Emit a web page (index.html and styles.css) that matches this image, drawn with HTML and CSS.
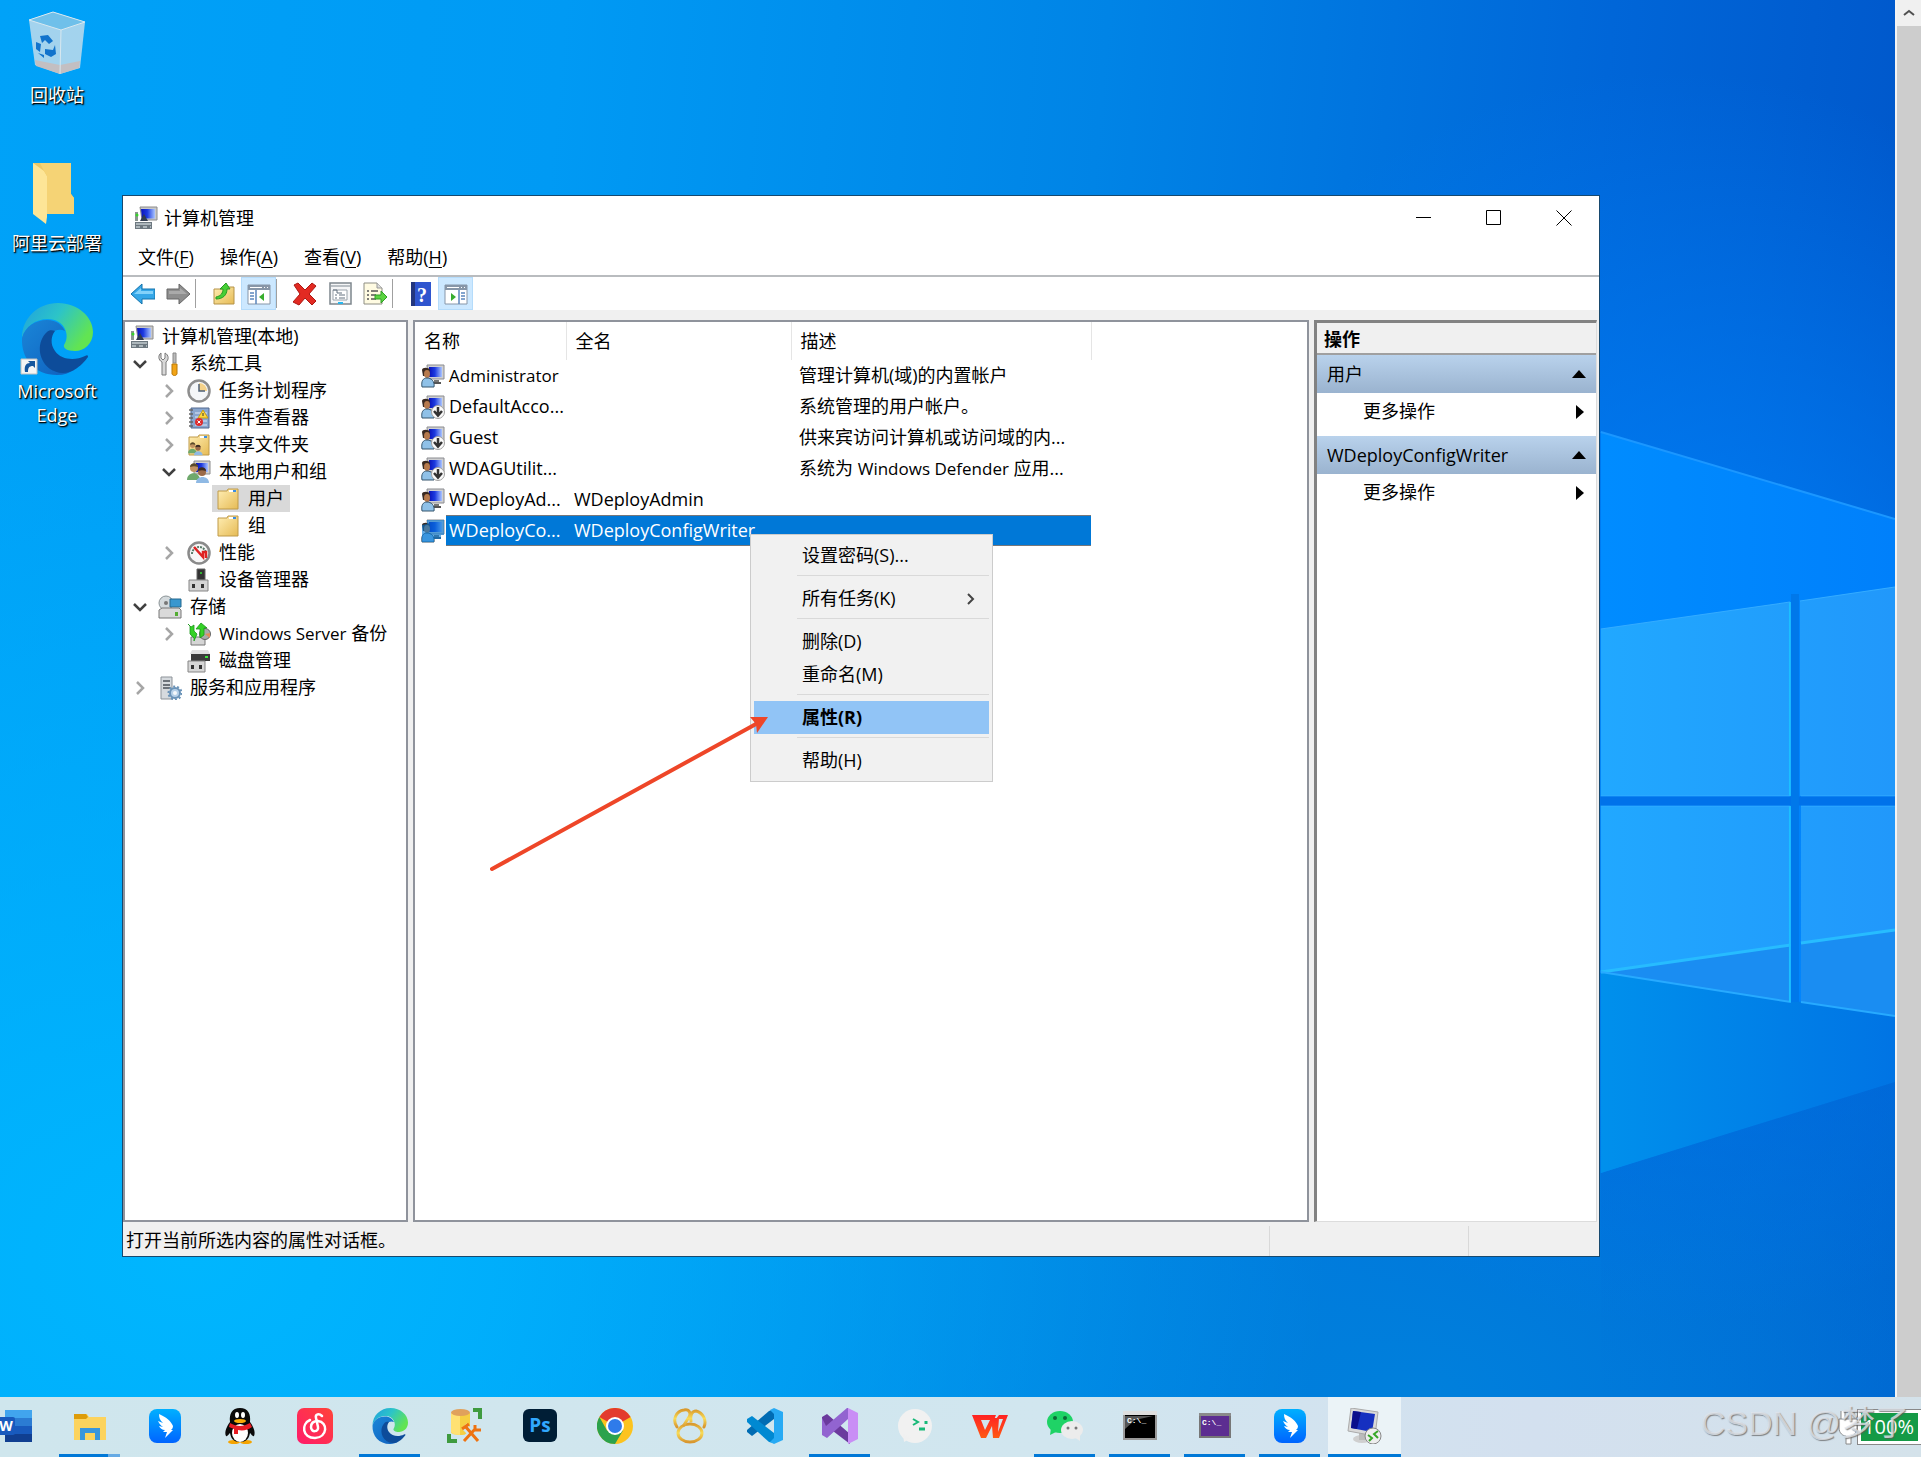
FILE: index.html
```html
<!DOCTYPE html>
<html lang="zh-CN">
<head>
<meta charset="utf-8">
<title>计算机管理</title>
<link rel="stylesheet" href="styles.css">
</head>
<body>
<svg class="defs" aria-hidden="true">
  <defs>
    <linearGradient id="screen" x1="0" y1="0" x2="1" y2="0"><stop offset="0" stop-color="#0a12b8"/><stop offset=".45" stop-color="#1c3ae0"/><stop offset="1" stop-color="#a9c4ff"/></linearGradient>
    <linearGradient id="folderFill" x1="0" y1="0" x2="1" y2="1"><stop offset="0" stop-color="#ffeeb4"/><stop offset="1" stop-color="#e6bb55"/></linearGradient>
    <linearGradient id="edgeTop" x1="0" y1="0" x2="1" y2=".5"><stop offset="0" stop-color="#1f9fe0"/><stop offset=".5" stop-color="#2cc4c8"/><stop offset="1" stop-color="#62e452"/></linearGradient>
    <linearGradient id="edgeBody" x1="0" y1="0" x2="1" y2="1"><stop offset="0" stop-color="#1a86d8"/><stop offset="1" stop-color="#0f5fbd"/></linearGradient>
    <linearGradient id="dingFill" x1="0" y1="0" x2="0" y2="1"><stop offset="0" stop-color="#00b0ff"/><stop offset="1" stop-color="#0064ff"/></linearGradient>
    <linearGradient id="neteaseFill" x1="0" y1="1" x2="1" y2="0"><stop offset="0" stop-color="#ff1b6b"/><stop offset="1" stop-color="#ff4438"/></linearGradient>
    <linearGradient id="goldFill" x1="0" y1="0" x2="0" y2="1"><stop offset="0" stop-color="#d99a2e"/><stop offset=".5" stop-color="#f8dc58"/><stop offset="1" stop-color="#d8962f"/></linearGradient>
    <linearGradient id="wpsFill" x1="0" y1="0" x2="0" y2="1"><stop offset="0" stop-color="#ff2222"/><stop offset="1" stop-color="#ff5a14"/></linearGradient>
    <linearGradient id="glass" x1="0" y1="0" x2="1" y2="0"><stop offset="0" stop-color="#21a8ff"/><stop offset="1" stop-color="#2198fb"/></linearGradient>
    <linearGradient id="beam" x1="0" y1="0" x2="1" y2="0"><stop offset="0" stop-color="#008cff"/><stop offset="1" stop-color="#0080fb"/></linearGradient>
    <linearGradient id="floor" x1="0" y1="0" x2="1" y2="0"><stop offset="0" stop-color="#0090ec"/><stop offset="1" stop-color="#0074e4"/></linearGradient>
    <linearGradient id="shade" x1="0" y1="0" x2="0" y2="1"><stop offset="0" stop-color="#006ad8" stop-opacity=".4"/><stop offset="1" stop-color="#0070d8" stop-opacity="0"/></linearGradient>

    <symbol id="i-computer" viewBox="0 0 24 24">
      <path d="M6 1h17v13H8z" fill="#c9c9c9" stroke="#8c8c8c"/><path d="M7 3h14v9.500H8z" fill="url(#screen)"/>
      <path d="M1 6h3v9H1z" fill="#8a9690"/><circle cx="3" cy="9" r="1.500" fill="#35d52a"/>
      <path d="M10 8l4 7H6z" fill="#303c50"/><path d="M1 16h17v7H1z" fill="#6d7880"/><path d="M2 18h15M2 21h4m3 0h4m3 0h1" stroke="#c2cbd0" stroke-width="1.500"/>
    </symbol>
    <symbol id="i-user" viewBox="0 0 24 24">
      <path d="M6 1h17v14H7z" fill="#cfd0d2" stroke="#8b8c90"/><path d="M8 3h13v10H8z" fill="url(#screen)"/><path d="M13 16h5v3h-5z" fill="#777"/><path d="M12 19h8" stroke="#555" stroke-width="2"/>
      <path d="M1 6c0-3 7-3 8 0l-1 6H2z" fill="#3a2a22"/><ellipse cx="6" cy="10" rx="3" ry="4" fill="#b77a4d"/><path d="M1 23c-1-6 1-9 5-9s8 3 7 9z" fill="#8fc1e8" stroke="#36566e"/>
    </symbol>
    <symbol id="i-user-off" viewBox="0 0 24 24"><use href="#i-user"/><circle cx="17" cy="17" r="6.500" fill="#fafafa" stroke="#a0a0a0"/><path d="M17 12v8m-4-4l4 4.500 4-4.500" fill="none" stroke="#333" stroke-width="2.500"/></symbol>
    <symbol id="i-user-sel" viewBox="0 0 24 24"><use href="#i-user"/><path d="M6 1h17v15h-3v4h-7v3H1V6l5-1z" fill="#0078d7" opacity=".6"/></symbol>
    <symbol id="i-tools" viewBox="0 0 24 24">
      <path d="M3 1v5l2 2 2-2V1c4 2 4 7 1 9v13H4V10C0 8 0 3 3 1z" fill="#d8d8d8" stroke="#7a7a7a"/><path d="M15 1h3v10h-3z" fill="#bbb" stroke="#888"/><path d="M14 12h5v10c-1 2-4 2-5 0z" fill="#f2a416" stroke="#b87808"/>
    </symbol>
    <symbol id="i-clock" viewBox="0 0 24 24"><circle cx="12" cy="12" r="10.500" fill="#f4f6f8" stroke="#8e8e8e" stroke-width="2.500"/><path d="M12 12V4a8 8 0 0 1 8 8z" fill="#f5d28a"/><path d="M12 5v7h6" fill="none" stroke="#4d6076" stroke-width="1.500"/></symbol>
    <symbol id="i-event" viewBox="0 0 24 24"><path d="M4 2h18v20H4z" fill="#89a6cf" stroke="#52688e"/><path d="M2 4h4M2 8h4M2 12h4M2 16h4M2 20h4" stroke="#666" stroke-width="1.500"/><path d="M8 7h12M8 11h12M8 15h12M8 19h12" stroke="#dfe8f6"/><path d="M16 4l5 8H11z" fill="#ffd83c" stroke="#c79c14"/><path d="M16 7v3" stroke="#333"/><circle cx="12" cy="16" r="4" fill="#de2d2d"/><path d="M10.500 14.500l3 3m0-3l-3 3" stroke="#fff"/></symbol>
    <symbol id="i-folder" viewBox="0 0 24 24"><path d="M2 4h9l1-2h10v20H2z" fill="url(#folderFill)" stroke="#bf9a49"/><path d="M13 4h7" stroke="#fff" stroke-width="2"/><path d="M17 4h3" stroke="#3a8de0" stroke-width="2"/></symbol>
    <symbol id="i-people" viewBox="0 0 24 24"><circle cx="7" cy="8" r="4" fill="#c29362"/><path d="M3 7c0-5 8-5 8 0-3-1-5-1-8 0z" fill="#5a4a2a"/><path d="M0 20c0-9 13-9 13 0z" fill="#6fa96c"/><circle cx="15" cy="12" r="4" fill="#9b6a48"/><path d="M11 11c0-5 8-5 8 0-3-1-5-1-8 0z" fill="#3a2a22"/><path d="M9 23c0-8 13-8 13 0z" fill="#8fb9e4"/></symbol>
    <symbol id="i-share" viewBox="0 0 24 24"><use href="#i-folder"/><svg x="1" y="7" width="16" height="16"><use href="#i-people"/></svg></symbol>
    <symbol id="i-group" viewBox="0 0 24 24"><path d="M7 1h16v13H7z" fill="#cfcfcf" stroke="#8c8c8c"/><path d="M9 3h12v9H9z" fill="url(#screen)"/><use href="#i-people"/></symbol>
    <symbol id="i-perf" viewBox="0 0 24 24"><circle cx="12" cy="12" r="10.500" fill="#f6f6f6" stroke="#8a8a8a" stroke-width="2.500"/><path d="M5 13a7 7 0 0 1 14 0" fill="none" stroke="#587a68" stroke-width="2" stroke-dasharray="2 1"/><path d="M7 6l9 10v-5h3v6" fill="none" stroke="#df2222" stroke-width="2.500"/></symbol>
    <symbol id="i-device" viewBox="0 0 24 24"><path d="M10 1h8v11h-8z" fill="#333" stroke="#666"/><circle cx="14" cy="5" r="1" fill="#33df33"/><path d="M2 12h19v11H2z" fill="#d5d5d5" stroke="#858585"/><path d="M5 16h3v4H5zm9 0h3v4h-3z" fill="#333"/></symbol>
    <symbol id="i-storage" viewBox="0 0 24 24"><circle cx="8" cy="8" r="7" fill="#d4dadd" stroke="#8b9396"/><circle cx="8" cy="8" r="2" fill="#777"/><path d="M12 4h11v8H12z" fill="#3997cf" stroke="#24688e"/><path d="M1 15l3-2h17l2 2v8H1z" fill="#dadada" stroke="#777"/><path d="M17 17h3v4h-3z" fill="#54ad33"/></symbol>
    <symbol id="i-backup" viewBox="0 0 24 24"><path d="M4 15h14v8H4z" fill="#d5d5d5" stroke="#777"/><circle cx="18" cy="12" r="5.500" fill="#aaa" stroke="#666"/><path d="M18 12l5-1v5z" fill="#e28b5c"/><path d="M1 2l2 2v8l4 4v3l3-7-3-3V3L4 5zm13-1l6 5h-3v7l-4 3V7H9z" fill="#35d226" stroke="#1a981a" stroke-width=".8"/></symbol>
    <symbol id="i-disk" viewBox="0 0 24 24"><path d="M5 1h16l2 4H3z" fill="#e0e0e0"/><path d="M4 5h19v7H4z" fill="#3a3a3a"/><path d="M18 8h3" stroke="#3ce33c" stroke-width="2"/><path d="M1 12h17v11H1z" fill="#d7d7d7" stroke="#858585"/><path d="M4 16h3v4H4zm8 0h3v4h-3z" fill="#333"/></symbol>
    <symbol id="i-service" viewBox="0 0 24 24"><path d="M3 1h11v22H3z" fill="#d6dade" stroke="#8d9399"/><path d="M5 5h7M5 9h7M5 12h7" stroke="#4a5058" stroke-width="1.500"/><circle cx="17" cy="17" r="5" fill="#b6d0e8" stroke="#6a93b8" stroke-width="2"/><circle cx="17" cy="17" r="6.500" fill="none" stroke="#6a93b8" stroke-width="2" stroke-dasharray="2 2"/><circle cx="17" cy="17" r="2" fill="#f4f8fb"/></symbol>
    <symbol id="i-open" viewBox="0 0 20 20"><path d="M4 7l6 6 6-6" fill="none" stroke="#404040" stroke-width="2.500"/></symbol>
    <symbol id="i-closed" viewBox="0 0 20 20"><path d="M7 4l6 6-6 6" fill="none" stroke="#a6a6a6" stroke-width="2.500"/></symbol>

    <symbol id="i-edge" viewBox="0 0 72 72">
      <path d="M1 35C1 15 17 0 37 0c20 0 35 14 35 29 0 12-9 19-18 19-8 0-12-3-11-6 7-10 0-26-16-26C14 16 4 24 1 35z" fill="url(#edgeTop)"/>
      <path d="M1 35c3-12 14-18 25-18 10 0 15 5 18 11-8-4-18 2-18 14 0 14 12 26 27 25-5 3-10 5-17 5C14 72 0 56 1 35z" fill="url(#edgeBody)"/>
      <path d="M26 29c-10 9-10 27 3 37 6 4 15 6 24 1 7-4 11-9 14-13 0-2-1-2-3-1-10 5-24 4-30-5-5-7-4-15 0-20-3-1-6-1-8 1z" fill="#0d4c9a"/>
    </symbol>
    <symbol id="i-ding" viewBox="0 0 36 36"><rect x="2" y="1" width="32" height="34" rx="8" fill="url(#dingFill)"/><path d="M12 6c7 3 12 7 14 12 0 2-1 3-2 4h2l-8 8 2-6h-4l2-2c-3 0-5-2-6-4l4 1c-3-2-4-4-5-6l5 2c-3-3-4-5-4-9z" fill="#fff"/></symbol>
  </defs>
</svg>

<main class="desktop">
  <svg class="wallpaper" viewBox="0 0 1894 1397" preserveAspectRatio="none" aria-hidden="true">
    <path d="M1600 432l294 87v560l-294 94z" fill="url(#beam)"/>
    <path d="M1600 432l294 87" stroke="#1b97ff" stroke-width="2"/>
    <path d="M1600 972l294 44v66l-294 91z" fill="url(#floor)"/>
    <path d="M1600 1173l294-91v315h-294z" fill="url(#shade)"/>
    <path d="M1600 629l189-27v194h-189zM1799 601l95-14v209h-95z" fill="url(#glass)"/>
    <path d="M1600 806h190v196l-190-30zM1800 806h94v210l-94-14z" fill="url(#glass)"/>
    <path d="M1600 972l190-27v57zM1800 943l94-13v86l-94-14z" fill="#1a8df2"/>
    <path d="M1600 972l190-27m10-2l94-13" stroke="#27bcff" stroke-width="3"/>
    <path d="M1600 972l190 30m10 0l94 14" stroke="#27aaff" stroke-width="2"/>
    <path d="M1789 602v194m0 10v196" stroke="#1cc0ff" stroke-width="2"/>
    <path d="M1600 629l189-27m10-1l95-14M1600 796h189m11 0h94M1600 806h189m11 0h94" stroke="#35acff" stroke-width="1"/>
    <path d="M1590 801h304" stroke="#0072ea" stroke-width="9"/>
    <path d="M1794 594v408" stroke="#0078ea" stroke-width="8"/>
  </svg>

  <div class="shortcuts">
    <button class="shortcut">
      <svg viewBox="0 0 114 83"><path d="M29 20l24-8 32 10-5 46-20 6-25-9z" fill="#b9d9ec" opacity=".88"/><path d="M29 20l24-8 32 10-24 8z" fill="#6fc0ea" stroke="#d8e8f0"/><path d="M35 60l25 5 20-4-1 7-19 6-24-8z" fill="#c3bfc2"/><path d="M61 30l-1 44" stroke="#d8e8f0"/><path d="M40 36l8-1 5 6-4 3-4-4-3 3zM36 42l5 2-1 8-4-3zM45 49l8 1 2-5 1 9-5 3-6-3zM38 53l6 2v3z" fill="#1173cc"/></svg>
      <span>回收站</span>
    </button>
    <button class="shortcut">
      <svg viewBox="0 0 114 83"><path d="M33 15h38v31l3 4v16H46l-11-3z" fill="#ecc766"/><path d="M33 15l11 8 3 5v41l-1 7-13-10z" fill="#fde597"/><path d="M40 15h31v31l3 4v16H47V28l-3-5z" fill="#f5d375"/></svg>
      <span>阿里云部署</span>
    </button>
    <button class="shortcut">
      <svg viewBox="0 0 114 83"><svg x="21" y="7" width="72" height="72"><use href="#i-edge"/></svg><path d="M21 63h16v15H21z" fill="#f4f4f4" stroke="#c0c0c0"/><path d="M25 76c-1-6 1-9 5-9l-2-2h7v7l-2-2c-4 0-5 2-5 6z" fill="#15559d"/></svg>
      <span>Microsoft Edge</span>
    </button>
  </div>

  <section class="window">
    <header class="titlebar">
      <svg class="icon"><use href="#i-computer"/></svg>
      <h1>计算机管理</h1>
      <div class="caption">
        <button aria-label="最小化"><svg viewBox="0 0 16 16"><path d="M0 7.500h15"/></svg></button>
        <button aria-label="最大化"><svg viewBox="0 0 16 16"><path d="M.5.5h14v14H.5z"/></svg></button>
        <button aria-label="关闭"><svg viewBox="0 0 16 16"><path d="M.5.5l15 15m0-15l-15 15"/></svg></button>
      </div>
    </header>
    <nav class="menubar">
      <button>文件(<u>F</u>)</button><button>操作(<u>A</u>)</button><button>查看(<u>V</u>)</button><button>帮助(<u>H</u>)</button>
    </nav>
    <div class="toolbar">
      <button aria-label="后退"><svg class="icon" viewBox="0 0 24 24"><path d="M0 12L11 2v5h13v10H11v5z" fill="#35a7e8" stroke="#1272ab"/><path d="M3 12l7-6v3h12v3z" fill="#83d2fa"/></svg></button>
      <button aria-label="前进"><svg class="icon" viewBox="0 0 24 24"><path d="M24 12L13 2v5H1v10h12v5z" fill="#8e8e8e" stroke="#666"/><path d="M21 12l-7-6v3H3v3z" fill="#aaa"/></svg></button>
      <i></i>
      <button aria-label="上一级"><svg class="icon" viewBox="0 0 24 24"><path d="M2 7h8l2-2h10v17H2z" fill="url(#folderFill)" stroke="#b59348"/><path d="M4 15c5-1 7-4 7-8H8l6-6 4 6h-3c0 6-4 10-11 10z" fill="#46cf35" stroke="#269a22"/></svg></button>
      <button class="on" aria-label="显示控制台树"><svg class="icon" viewBox="0 0 24 24"><path d="M1 3h22v19H1z" fill="#fff" stroke="#8796a8"/><path d="M1 3h22v5H1z" fill="#8796a8"/><path d="M3 5.500h12m2 0h1m2 0h1" stroke="#fff"/><path d="M9 8v14M3 11h4M3 14h4M3 17h4" stroke="#5b87bd" stroke-width="1.500"/><path d="M17 11v8l-5-4z" fill="#38ad2d"/></svg></button>
      <i></i>
      <button aria-label="删除"><svg class="icon" viewBox="0 0 24 24"><path d="M1 3l4-2 7 7 7-7 4 3-7 8 7 7-4 4-7-7-6 7-6-3 7-8z" fill="#e22a22" stroke="#ad1712"/></svg></button>
      <button aria-label="属性"><svg class="icon" viewBox="0 0 24 24"><path d="M2 1h21v21H2z" fill="#f5f6f7" stroke="#7e868d" stroke-width="1.500"/><path d="M3 4h19" stroke="#b9bfc4" stroke-width="2"/><path d="M5 8h14v10H5z" fill="#fff" stroke="#9aa3ab"/><path d="M5 8h4v3h5M7 13h2m2 0h6M7 16h2m2 0h6" fill="none" stroke="#63717e"/><path d="M10 21h5" stroke="#28b6ee" stroke-width="2"/></svg></button>
      <button aria-label="导出列表"><svg class="icon" viewBox="0 0 24 24"><path d="M1 1h13l5 5v16H1z" fill="#fffbe2" stroke="#8e8e84"/><path d="M14 1v5h5" fill="#ddd" stroke="#999"/><path d="M4 9h2m2 0h7M4 13h2m2 0h5M4 17h2m2 0h5" stroke="#555" stroke-width="1.500"/><path d="M12 13h6V9l6 6-6 6v-4h-6z" fill="#5bd341" stroke="#2f9e26"/></svg></button>
      <i></i>
      <button aria-label="帮助"><svg class="icon" viewBox="0 0 24 24"><path d="M2 0h20v24H2z" fill="#2f55cf"/><path d="M2 0h4v24H2z" fill="#23367e"/><text x="13" y="20" text-anchor="middle" class="qmark">?</text></svg></button>
      <button class="on" aria-label="显示操作窗格"><svg class="icon" viewBox="0 0 24 24"><path d="M1 3h22v19H1z" fill="#fff" stroke="#8796a8"/><path d="M1 3h22v5H1z" fill="#8796a8"/><path d="M3 5.500h12m2 0h1m2 0h1" stroke="#fff"/><path d="M15 8v14M17 11h4M17 14h4M17 17h4" stroke="#5b87bd" stroke-width="1.500"/><path d="M7 11v8l5-4z" fill="#38ad2d"/></svg></button>
    </div>

    <div class="panes">
      <ul class="tree pane">
        <li class="l0"><svg class="icon"><use href="#i-computer"/></svg><span>计算机管理(本地)</span></li>
        <li class="l1"><svg class="chev"><use href="#i-open"/></svg><svg class="icon"><use href="#i-tools"/></svg><span>系统工具</span></li>
        <li class="l2"><svg class="chev"><use href="#i-closed"/></svg><svg class="icon"><use href="#i-clock"/></svg><span>任务计划程序</span></li>
        <li class="l2"><svg class="chev"><use href="#i-closed"/></svg><svg class="icon"><use href="#i-event"/></svg><span>事件查看器</span></li>
        <li class="l2"><svg class="chev"><use href="#i-closed"/></svg><svg class="icon"><use href="#i-share"/></svg><span>共享文件夹</span></li>
        <li class="l2"><svg class="chev"><use href="#i-open"/></svg><svg class="icon"><use href="#i-group"/></svg><span>本地用户和组</span></li>
        <li class="l3"><div class="picked"><svg class="icon"><use href="#i-folder"/></svg><span>用户</span></div></li>
        <li class="l3"><div><svg class="icon"><use href="#i-folder"/></svg><span>组</span></div></li>
        <li class="l2"><svg class="chev"><use href="#i-closed"/></svg><svg class="icon"><use href="#i-perf"/></svg><span>性能</span></li>
        <li class="l2"><svg class="chev"></svg><svg class="icon"><use href="#i-device"/></svg><span>设备管理器</span></li>
        <li class="l1"><svg class="chev"><use href="#i-open"/></svg><svg class="icon"><use href="#i-storage"/></svg><span>存储</span></li>
        <li class="l2"><svg class="chev"><use href="#i-closed"/></svg><svg class="icon"><use href="#i-backup"/></svg><span><span class="latin">Windows Server</span> 备份</span></li>
        <li class="l2"><svg class="chev"></svg><svg class="icon"><use href="#i-disk"/></svg><span>磁盘管理</span></li>
        <li class="l1"><svg class="chev"><use href="#i-closed"/></svg><svg class="icon"><use href="#i-service"/></svg><span>服务和应用程序</span></li>
      </ul>

      <div class="list pane">
        <table>
          <colgroup><col class="c-name"><col class="c-full"><col class="c-desc"></colgroup>
          <thead><tr><th>名称</th><th>全名</th><th>描述</th></tr></thead>
          <tbody>
            <tr><td><div><svg class="icon"><use href="#i-user"/></svg><span class="latin">Administrator</span></div></td><td></td><td>管理计算机(域)的内置帐户</td></tr>
            <tr><td><div><svg class="icon"><use href="#i-user-off"/></svg><span>DefaultAcco...</span></div></td><td></td><td>系统管理的用户帐户。</td></tr>
            <tr><td><div><svg class="icon"><use href="#i-user-off"/></svg><span>Guest</span></div></td><td></td><td>供来宾访问计算机或访问域的内...</td></tr>
            <tr><td><div><svg class="icon"><use href="#i-user-off"/></svg><span>WDAGUtilit...</span></div></td><td></td><td>系统为 <span class="latin">Windows Defender</span> 应用...</td></tr>
            <tr><td><div><svg class="icon"><use href="#i-user"/></svg><span>WDeployAd...</span></div></td><td>WDeployAdmin</td><td></td></tr>
            <tr class="selected"><td><div><svg class="icon"><use href="#i-user-sel"/></svg><span>WDeployCo...</span></div></td><td>WDeployConfigWriter</td><td></td></tr>
          </tbody>
        </table>
      </div>

      <aside class="actions">
        <h2>操作</h2>
        <button class="group">用户<svg viewBox="0 0 14 8"><path d="M0 8l7-8 7 8z"/></svg></button>
        <button class="more">更多操作<svg viewBox="0 0 14 14"><path d="M4 0l8 7-8 7z"/></svg></button>
        <button class="group">WDeployConfigWriter<svg viewBox="0 0 14 8"><path d="M0 8l7-8 7 8z"/></svg></button>
        <button class="more">更多操作<svg viewBox="0 0 14 14"><path d="M4 0l8 7-8 7z"/></svg></button>
      </aside>
    </div>

    <footer class="status"><span>打开当前所选内容的属性对话框。</span><span></span><span></span></footer>
  </section>

  <div class="context">
    <button>设置密码(S)...</button>
    <hr>
    <button>所有任务(K)<svg viewBox="0 0 12 12"><path d="M3 1l5 5-5 5" fill="none" stroke="#444" stroke-width="2"/></svg></button>
    <hr>
    <button>删除(D)</button>
    <button>重命名(M)</button>
    <hr>
    <button class="hot">属性(R)</button>
    <hr>
    <button>帮助(H)</button>
  </div>

  <svg class="arrow" viewBox="0 0 280 156" aria-hidden="true"><path d="M2 153L266 8" stroke="#ee4628" stroke-width="4" stroke-linecap="round"/><path d="M278 1L260 1l6 7 1 9z" fill="#ee4628"/></svg>
</main>

<div class="scroll"><button aria-label="向上滚动"><svg viewBox="0 0 12 8"><path d="M1 6l5-4 5 4" fill="none" stroke="#505050" stroke-width="2"/></svg></button></div>

<footer class="taskbar">
  <button aria-label="Word"><svg viewBox="0 0 36 36"><path d="M8 2h27v8H8z" fill="#41a5ee"/><path d="M8 10h27v8H8z" fill="#2b7cd3"/><path d="M8 18h27v8H8z" fill="#185abd"/><path d="M8 26h27v8H8z" fill="#103f91"/><rect x="0" y="9" width="18" height="18" rx="2" fill="#185abd"/><text x="9" y="23" text-anchor="middle" class="word">W</text></svg></button>
  <button class="run multi" aria-label="文件资源管理器"><svg viewBox="0 0 36 36"><path d="M2 6h13l2 3h17v23H2z" fill="#fcd35d"/><path d="M2 6h12l2 3-2 2H2z" fill="#dd9c09"/><path d="M8 20h20v12h-5v-7H13v7H8z" fill="#3a96dc"/></svg></button>
  <button aria-label="钉钉"><svg><use href="#i-ding"/></svg></button>
  <button aria-label="QQ"><svg viewBox="0 0 36 36"><ellipse cx="12" cy="34" rx="6" ry="2" fill="#f5a400"/><ellipse cx="24" cy="34" rx="6" ry="2" fill="#f5a400"/><path d="M18 0c-8 0-11 6-10 14-3 4-6 10-4 14 1 1 3-2 4-3 1 6 4 9 10 9s9-3 10-9c1 1 3 4 4 3 2-4-1-10-4-14C29 6 26 0 18 0z" fill="#0a0a0a"/><ellipse cx="18" cy="25" rx="8" ry="9" fill="#fff"/><path d="M8 15c7 4 13 4 20 0l2 4c-4 3-9 4-14 3v4h-4v-5l-5-2z" fill="#e81c24"/><ellipse cx="15" cy="7" rx="2" ry="3" fill="#fff"/><ellipse cx="21" cy="7" rx="2" ry="3" fill="#fff"/><ellipse cx="18" cy="13" rx="6" ry="2" fill="#faab07"/></svg></button>
  <button aria-label="网易云音乐"><svg viewBox="0 0 36 36"><rect width="36" height="36" rx="7" fill="url(#neteaseFill)"/><path d="M25 8c-3-3-7-2-6 2l2 9c1 5-7 6-7 0 0-4 3-6 7-6 10 1 10 16-3 17C5 30 4 16 13 12" fill="none" stroke="#fff" stroke-width="2.500" stroke-linecap="round"/></svg></button>
  <button class="run" aria-label="Edge"><svg><use href="#i-edge"/></svg></button>
  <button aria-label="数据库工具"><svg viewBox="0 0 36 36"><path d="M4 5v19c0 4 19 4 19 0V5z" fill="#f6cf42"/><path d="M4 5v19c1 2 4 3 9 3V5z" fill="#ffe173"/><ellipse cx="13.500" cy="4.500" rx="9.500" ry="3.500" fill="#e0a15c"/><path d="M26 2h7v9M2 26v7h8" fill="none" stroke="#3f9b3f" stroke-width="4"/><path d="M17 18l14 14m0-14L17 33" stroke="#d2e7ee" stroke-width="7"/><path d="M18 18l13 15M29 20L17 33M15 21l7-5M28 17v5h6" fill="none" stroke="#ee7311" stroke-width="3"/></svg></button>
  <button aria-label="Photoshop"><svg viewBox="0 0 36 36"><rect x="1" y="1" width="34" height="33" rx="6" fill="#001e36"/><text x="18" y="24" text-anchor="middle" class="ps">Ps</text></svg></button>
  <button aria-label="Chrome"><svg viewBox="0 0 36 36"><circle cx="18" cy="18" r="18" fill="#fcc31e"/><path d="M18 18L2.400 9A18 18 0 0 1 33.600 9z" fill="#e33b2e"/><path d="M2.400 9A18 18 0 0 0 18 36l8-13.500-8 3-8-3z" fill="#2ba24c"/><circle cx="18" cy="18" r="9" fill="#fff"/><circle cx="18" cy="18" r="7" fill="#2f7bea"/></svg></button>
  <button aria-label="Navicat"><svg viewBox="0 0 36 36"><ellipse cx="18" cy="25" rx="12" ry="9" fill="none" stroke="url(#goldFill)" stroke-width="3"/><path d="M5 19C0 12 4 3 12 2c6-1 7 4 5 7l-5 8M19 13c-1-6 1-10 5-10 7 2 11 9 8 16" fill="none" stroke="url(#goldFill)" stroke-width="3" stroke-linecap="round"/></svg></button>
  <button aria-label="VS Code"><svg viewBox="0 0 36 36"><path d="M27 1v10L5 28l-5-4v-2L22 3z" fill="#006cb3"/><path d="M27 35V25L5 8 0 11v3l22 20z" fill="#0089d2"/><path d="M27 0l9 4v28l-9 4-4-2 4-4V6l-4-4z" fill="#27aaf4"/></svg></button>
  <button class="run" aria-label="Visual Studio"><svg viewBox="0 0 36 36"><path d="M0 9l5-3 23 20v10L7 20l-4 5-3-2z" fill="#6b3a9d"/><path d="M26 0v11L5 30l-5-3V10l4 8L25 0z" fill="#9264d0"/><path d="M26 0l10 5v26l-10 5z" fill="#c98ef5"/></svg></button>
  <button aria-label="终端"><svg viewBox="0 0 36 36"><circle cx="18" cy="18" r="17" fill="#f1f1f1"/><path d="M6 26l1 8 7-4z" fill="#f0f0f0"/><path d="M16 11l5 3-5 3" fill="none" stroke="#17b978" stroke-width="2"/><path d="M29 13v3M22 21h6" stroke="#17b978" stroke-width="3"/></svg></button>
  <button aria-label="WPS"><svg viewBox="0 0 36 36"><path d="M0 7h24l-2 5h-13l4 10 6-12h8l-1 14 5-13h-7l3-4h9l-9 23h-6l-1-12-6 12h-5z" fill="url(#wpsFill)"/></svg></button>
  <button class="run" aria-label="微信"><svg viewBox="0 0 36 36"><ellipse cx="13" cy="14" rx="13" ry="11" fill="#1fd366"/><path d="M4 20l-1 7 8-4z" fill="#1fd366"/><circle cx="8" cy="10" r="2" fill="#0d6b38"/><circle cx="18" cy="10" r="2" fill="#0d6b38"/><ellipse cx="25" cy="22" rx="11" ry="9" fill="#ececec"/><path d="M27 29l6 4v-6z" fill="#ececec"/><circle cx="21" cy="20" r="1.500" fill="#777"/><circle cx="29" cy="20" r="1.500" fill="#777"/></svg></button>
  <button class="run" aria-label="命令提示符"><svg viewBox="0 0 36 36"><path d="M2 4h32v27H2z" fill="#000" stroke="#999" stroke-width="2"/><path d="M1 3h34v4H1z" fill="#dedede"/><path d="M3 8h28L13 12 3 21z" fill="#555"/><text x="5" y="15" class="cmd">C:\_</text></svg></button>
  <button class="run" aria-label="开发者命令提示符"><svg viewBox="0 0 36 36"><path d="M3 6h30v23H3z" fill="#5c2d91" stroke="#777" stroke-width="2"/><path d="M2 5h32v3H2z" fill="#8a8a8a"/><text x="5" y="17" class="cmd">C:\_</text></svg></button>
  <button class="run" aria-label="钉钉会议"><svg><use href="#i-ding"/></svg></button>
  <button class="run front" aria-label="远程桌面"><svg viewBox="0 0 36 36"><ellipse cx="15" cy="31" rx="9" ry="4" fill="#cfcfcf"/><path d="M12 24h8v8h-8z" fill="#bbb"/><path d="M4 0l27 4-3 24L1 23z" fill="#d9d9d9" stroke="#aaa"/><path d="M6 3l22 3-3 18L4 20z" fill="#1530c0"/><path d="M6 3l8 1-4 17-6-1z" fill="#0a0f8c"/><circle cx="26" cy="28" r="8" fill="#eee" stroke="#888"/><path d="M21 27l4 3-3 3M31 23l-4 3 4 4" fill="none" stroke="#37a727" stroke-width="2"/></svg></button>
  <div class="power"><svg viewBox="0 0 20 36"><path d="M5 2v8m9-8v8" stroke="#888" stroke-width="5"/><path d="M5 2v8m9-8v8" stroke="#fff" stroke-width="3"/><path d="M1 10h18v9c0 5-4 8-6 8v8H8v-8c-3 0-7-3-7-8z" fill="#fff" stroke="#888"/></svg><span>100%</span></div>
  <p class="watermark">CSDN @梦了</p>
</footer>
</body>
</html>
```
FILE: styles.css
```css
* { box-sizing: border-box; }

body {
  margin: 0;
  height: 100vh;
  overflow: hidden;
  display: grid;
  grid-template: minmax(0, 1fr) 60px / minmax(0, 1fr) 26px;
  font: 18px/27px "Open Sans", "Noto Sans CJK SC", sans-serif;
  color: #000;
}

button {
  font: inherit;
  color: inherit;
  background: none;
  border: 0;
  padding: 0;
  text-align: left;
}

h1, h2, p, ul { margin: 0; padding: 0; font: inherit; }
ul { list-style: none; }

.defs { position: absolute; width: 0; height: 0; }
.latin { font-size: 17px; }
.icon { width: 24px; height: 24px; flex: none; display: block; }
.qmark { font: bold 20px "Liberation Serif", serif; fill: #fff; }

/* Desktop */
.desktop {
  position: relative;
  overflow: hidden;
  background:
    radial-gradient(ellipse 60% 60% at 10% 90%, #00b6fe 0%, rgba(0, 182, 254, 0) 100%),
    radial-gradient(ellipse 30% 45% at 88% 50%, #0080f8 0%, rgba(0, 128, 248, 0) 100%),
    radial-gradient(ellipse 50% 40% at 75% 100%, #0080dc 0%, rgba(0, 128, 220, 0) 100%),
    linear-gradient(95deg, #00a2f8 0%, #009af4 28%, #0084e6 55%, #0066d8 80%, #0054c8 100%);
}

.wallpaper { position: absolute; inset: 0; width: 100%; height: 100%; }

.shortcuts { position: relative; width: 114px; }

.shortcut {
  display: flex;
  flex-direction: column;
  align-items: center;
  justify-content: flex-start;
  width: 100%;
  height: 148px;
  text-align: center;
  line-height: 24px;
  color: #fff;
  text-shadow: 1px 1px 2px #000, 1px 1px 1px #000;
}

.shortcut svg { display: block; width: 114px; height: 83px; flex: none; }
.shortcut svg svg { width: 72px; height: 72px; }
.shortcut span { padding: 0 12px; }
.shortcut:nth-child(2) span { padding: 0; }

/* Management window */
.window {
  position: absolute;
  inset: 195px 295px 140px 122px;
  display: flex;
  flex-direction: column;
  background: #f0f0f0;
  border: 1px solid #17496f;
}

.titlebar {
  display: flex;
  align-items: center;
  gap: 6px;
  height: 44px;
  padding-left: 11px;
  background: #fff;
}

.caption { display: flex; margin-left: auto; }
.caption button { width: 70px; height: 44px; display: grid; place-items: center; }
.caption svg { width: 16px; height: 16px; fill: none; stroke: #000; }

.menubar {
  display: flex;
  gap: 26px;
  height: 37px;
  padding: 0 15px;
  align-items: center;
  background: #fff;
  border-bottom: 2px solid #b9bcbf;
}

.menubar u { text-underline-offset: 3px; }

.toolbar {
  display: flex;
  height: 33px;
  padding-left: 2px;
  background: #fff;
}

.toolbar button { width: 35px; display: grid; place-items: center; }
.toolbar i { width: 11px; margin: 2px 0; border-left: 1px solid #a0a0a0; }
.toolbar .on { background: #cce8ff; border: 1px solid #b5dcfb; }

.panes {
  flex: 1;
  min-height: 0;
  display: grid;
  grid-template-columns: 285px minmax(0, 1fr) 283px;
  gap: 5px;
  padding: 10px 2px 0 0;
}

.pane { background: #fff; border: 2px solid #8f939c; overflow: hidden; }

.tree { padding-top: 1px; }
.tree li { display: flex; align-items: center; gap: 8px; height: 27px; padding-left: 5px; white-space: nowrap; }
.tree .l2 { padding-left: 34px; }
.tree .l3 { padding-left: 87px; }
.tree li div { display: flex; gap: 8px; padding: 0 6px 0 4px; align-items: center; }
.tree .picked { background: #d9d9d9; }
.chev { width: 20px; height: 20px; flex: none; }

table { width: 676px; table-layout: fixed; border-collapse: collapse; }
.c-name { width: 151px; }
.c-full { width: 225px; }
.c-desc { width: 300px; }
th { height: 38px; padding: 0 9px; text-align: left; font-weight: normal; border-right: 1px solid #e5e5e5; }
td { height: 31px; padding: 0 8px; line-height: 29px; white-space: nowrap; }
td:first-child { padding: 0 0 0 6px; }
td div { display: flex; align-items: center; gap: 1px; }
td div span { flex: 1; padding-left: 3px; }
.selected { color: #fff; }
.selected td:not(:first-child), .selected td div span { background: #0078d7; box-shadow: inset 0 1px #77777a, inset 0 -1px #77777a; }
.selected td div span { line-height: 31px; }

.actions { background: #fff; border: 1px solid #dcdcdc; border-top: 3px solid #828282; border-left: 3px solid #828282; }
.actions h2 { height: 32px; padding: 3px 7px; font-weight: bold; background: #f0f0f0; border-bottom: 2px solid #a0a0a0; }
.actions button { display: flex; width: 100%; align-items: center; justify-content: space-between; }
.actions .group { height: 38px; padding: 0 10px; background: linear-gradient(#b9d2ec, #9ab3cf); }
.actions .more { height: 37px; padding: 0 10px 0 46px; margin-bottom: 6px; }
.actions svg { width: 14px; height: 14px; }

.status { display: grid; grid-template-columns: minmax(0, 1fr) 199px 131px; height: 34px; padding: 4px 0 0 3px; }
.status span + span { border-left: 1px solid #d9d9d9; }
.status span { line-height: 29px; }

/* Shortcut menu of the selected account */
.context {
  position: absolute;
  left: 750px;
  top: 534px;
  width: 243px;
  padding: 4px 3px;
  background: #f1f1f1;
  border: 1px solid #ccc;
}

.context button { display: flex; align-items: center; justify-content: space-between; width: 100%; height: 33px; padding: 0 12px 0 48px; }
.context svg { width: 12px; height: 12px; }
.context hr { height: 1px; margin: 3px 0 6px 43px; border: 0; background: #d9d9d9; }
.context .hot { background: #91c4f6; font-weight: bold; }

.arrow { position: absolute; left: 490px; top: 716px; width: 280px; height: 156px; }

.scroll { background: #cdcdcd; border-left: 2px solid #f4f4f4; }
.scroll button { display: grid; place-items: center; width: 100%; height: 26px; background: #f0f0f0; }
.scroll svg { width: 12px; height: 8px; }

/* Taskbar */
.taskbar {
  grid-column: 1 / -1;
  position: relative;
  display: flex;
  gap: 2px;
  overflow: hidden;
  background: linear-gradient(90deg, #cfe6ed, #d1e6ef 55%, #d3e0ef 80%, #d4e2ea);
}

.taskbar button { flex: none; width: 73px; display: grid; place-items: center; border-bottom: 3px solid transparent; }
.taskbar button:first-child { margin-left: -22px; }
.taskbar button svg { width: 36px; height: 36px; }
.taskbar .run { background: linear-gradient(#0078d7, #0078d7) center bottom / 61px 3px no-repeat border-box; }
.taskbar .multi { background-image: linear-gradient(90deg, #0078d7 80%, #66aae4 80%); }
.taskbar .front { background-color: #ebf3f7; background-size: 100% 3px; }
.word { font: bold 14px "Open Sans", sans-serif; fill: #fff; }
.ps { font: bold 19px "Open Sans", sans-serif; fill: #31a8ff; }
.cmd { font: bold 8px "Liberation Mono", monospace; fill: #fff; }

.power { display: flex; align-items: center; margin-left: auto; }
.power svg { width: 20px; height: 36px; }
.power span {
  width: 63px;
  height: 34px;
  font-size: 20px;
  line-height: 28px;
  text-align: right;
  padding-right: 4px;
  color: #fff;
  background: #159a46;
  border: 3px solid #fff;
  outline: 1px solid #888;
}

.watermark {
  position: absolute;
  right: 12px;
  top: 7px;
  font: 34px/38px "Liberation Sans", "Noto Sans CJK SC", sans-serif;
  color: rgba(226, 230, 236, .8);
  text-shadow: 1px 1px 1px rgba(90, 90, 90, .7);
}
```
